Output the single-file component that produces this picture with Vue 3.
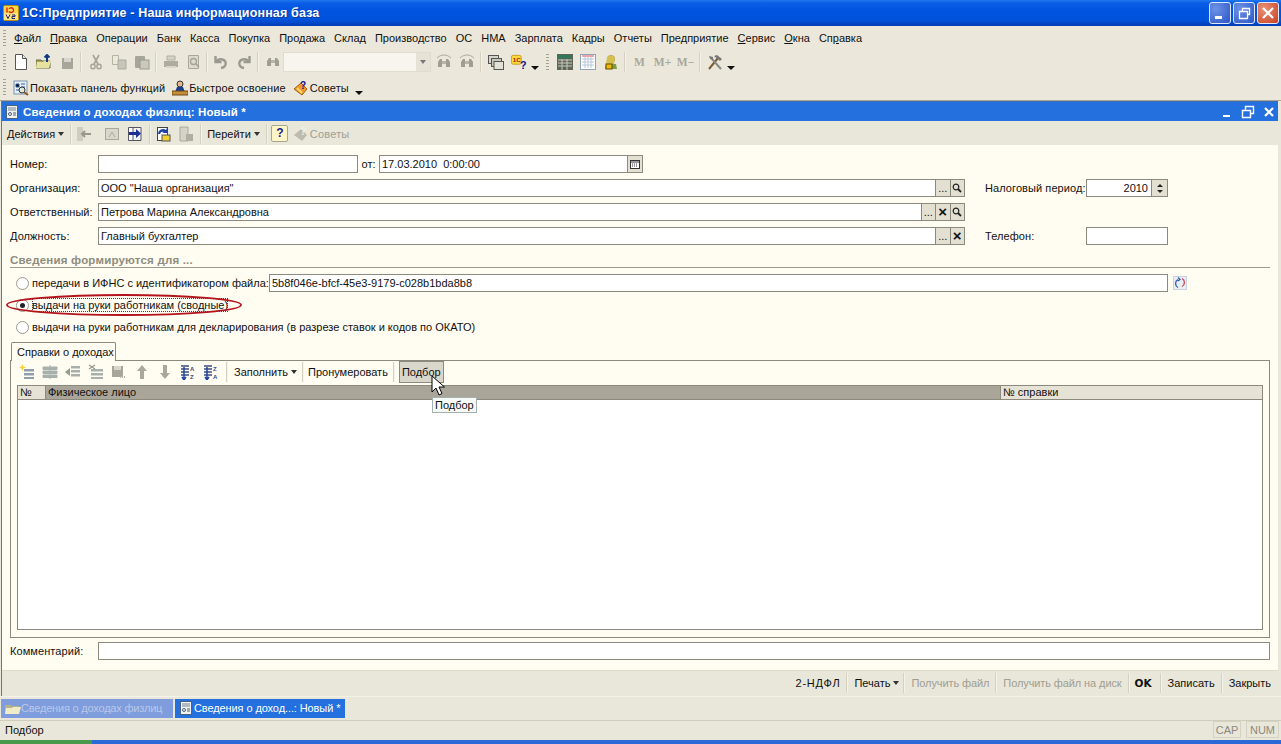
<template>
  <div class="app">
    <header class="title">
      <svg class="logo" viewBox="0 0 16 16" width="16" height="16"><rect x=".5" y=".5" width="15" height="15" rx="1.5" fill="#ffd84a" stroke="#b98a10"/><rect x="1" y="8" width="14" height="7" fill="#ffe680"/><path d="M3 2.500v5M5 4a2.400 2.400 0 1 1 0 2.400" stroke="#d22" stroke-width="1.400" fill="none" transform="translate(1 0)"/><path d="M3 9.500l2 4 2-4M9 10h3v1.500h-3v2h3" stroke="#227" fill="none"/></svg>
      <span class="title-text">1С:Предприятие - Наша информационная база</span>
      <span class="caption-btns">
        <span class="cap-btn"><svg viewBox="0 0 20 20" width="20" height="20"><rect x="5" y="13" width="7" height="3" fill="#fff"/></svg></span>
        <span class="cap-btn"><svg viewBox="0 0 20 20" width="20" height="20"><path d="M5.500 8.500h8v7h-8zM8.500 8V5.500h7v6H14" stroke="#fff" fill="none" stroke-width="1.300"/></svg></span>
        <span class="cap-btn close"><svg viewBox="0 0 20 20" width="20" height="20"><path d="M5 5l10 10M15 5L5 15" stroke="#fff" stroke-width="2.200"/></svg></span>
      </span>
    </header>

    <nav class="menu">
      <i class="grip"></i>
      <span><u>Ф</u>айл</span><span><u>П</u>равка</span><span>Операции</span><span>Банк</span><span>Касса</span><span>Покупка</span><span>Продажа</span><span>Склад</span><span>Производство</span><span>ОС</span><span>НМА</span><span>Зарплата</span><span>Кадры</span><span>Отчеты</span><span>Предприятие</span><span><u>С</u>ервис</span><span><u>О</u>кна</span><span>Сп<u>р</u>авка</span>
    </nav>

    <div class="toolbar tb1">
      <i class="grip"></i>
      <b class="ib"><svg viewBox="0 0 16 16"><path d="M2.500 .5h7l4 4v11h-11z" fill="#fff" stroke="#555"/><path d="M9.500 .5v4h4" fill="#ece9d8" stroke="#555"/></svg></b>
      <b class="ib"><svg viewBox="0 0 16 16"><path d="M0 6h5l1 1h8v7H0z" fill="#a8a468" stroke="#6d6a40"/><path d="M1 8h6l1-1h7l-2 7H0z" fill="#e8e2a0"/><path d="M11 8V1M8.500 3.500L11 1l2.500 2.500" stroke="#123a80" stroke-width="2" fill="none"/></svg></b>
      <b class="ib"><svg viewBox="0 0 16 16"><rect x="3" y="4" width="11" height="11" fill="#a8a69a"/><rect x="5" y="4" width="7" height="4" fill="#d8d6cc"/></svg></b>
      <i class="sep"></i>
      <b class="ib"><svg viewBox="0 0 16 16"><path d="M5 1l5 9M11 1L6 10" stroke="#a5a396" stroke-width="1.600"/><circle cx="5" cy="12.500" r="2.200" fill="none" stroke="#a5a396" stroke-width="1.400"/><circle cx="11" cy="12.500" r="2.200" fill="none" stroke="#a5a396" stroke-width="1.400"/></svg></b>
      <b class="ib"><svg viewBox="0 0 16 16"><path d="M1.500 1.500h6v9h-6z" fill="#ece9d8" stroke="#b4b2a6"/><path d="M7 6h8v9H7z" fill="#c8c6ba" stroke="#aaa89c"/></svg></b>
      <b class="ib"><svg viewBox="0 0 16 16"><rect x="1" y="2" width="10" height="12" rx="1" fill="#a8a69a"/><rect x="6" y="6" width="9" height="9" fill="#cbc9be" stroke="#9c9a8e"/></svg></b>
      <i class="sep"></i>
      <b class="ib"><svg viewBox="0 0 16 16"><path d="M4 2h8v4H4z" fill="#d5d3c8" stroke="#b0aea2"/><path d="M1 7h14v6H1z" fill="#aeac9f"/><path d="M3 13h10" stroke="#d8d6cb" stroke-width="2"/></svg></b>
      <b class="ib"><svg viewBox="0 0 16 16"><path d="M2.500 1.500h10v13h-10z" fill="#dcdacd" stroke="#aaa89c"/><circle cx="7.500" cy="7.500" r="3" fill="none" stroke="#a5a396" stroke-width="1.300"/><path d="M10 10l3 3" stroke="#a5a396" stroke-width="1.600"/></svg></b>
      <i class="sep s4"></i>
      <b class="ib"><svg viewBox="0 0 16 16"><path d="M2.500 2v6h6" fill="none" stroke="#9b9990" stroke-width="2.400"/><path d="M3 8a5.500 5.500 0 0 1 9.500 0c1 3-1 5.500-4.500 6" fill="none" stroke="#9b9990" stroke-width="2.400"/></svg></b>
      <b class="ib"><svg viewBox="0 0 16 16"><path d="M13.500 2v6h-6" fill="none" stroke="#9b9990" stroke-width="2.400"/><path d="M13 8a5.500 5.500 0 0 0-9.500 0c-1 3 1 5.500 4.500 6" fill="none" stroke="#9b9990" stroke-width="2.400"/></svg></b>
      <i class="sep"></i>
      <b class="ib"><svg viewBox="0 0 16 16"><path d="M2 12V7l2-3h2v8zM14 12V7l-2-3h-2v8z" fill="#a09e92"/><rect x="6" y="6" width="4" height="3" fill="#b8b6aa"/></svg></b>
      <span class="combo"><i></i><em><s></s></em></span>
      <b class="ib"><svg viewBox="0 0 16 16"><path d="M2 13V8l2-3h2v8zM14 13V8l-2-3h-2v8z" fill="#a09e92"/><rect x="6" y="7" width="4" height="3" fill="#b8b6aa"/><path d="M1 4C5 0 11 0 15 4" fill="none" stroke="#aaa89c"/></svg></b>
      <b class="ib"><svg viewBox="0 0 16 16"><path d="M2 13V8l2-3h2v8zM14 13V8l-2-3h-2v8z" fill="#a09e92"/><rect x="6" y="7" width="4" height="3" fill="#b8b6aa"/><path d="M1 4C5 0 11 0 15 4" fill="none" stroke="#aaa89c"/></svg></b>
      <i class="sep"></i>
      <b class="ib"><svg viewBox="0 0 16 16"><rect x=".5" y="1.500" width="10" height="8" fill="#d5d3c8" stroke="#555"/><rect x="3.500" y="4.500" width="10" height="8" fill="#c8c6bc" stroke="#555"/><rect x="6" y="7.500" width="9.500" height="8" fill="#e3e1d6" stroke="#555"/></svg></b>
      <b class="ib"><svg viewBox="0 0 18 16"><rect x=".5" y=".5" width="11" height="10" rx="2" fill="#ffd93b" stroke="#c7981a"/><text x="2" y="7.500" class="mini">1C</text><text x="10" y="15.500" class="q">?</text></svg></b>
      <i class="drop"></i>
      <i class="grip g2"></i>
      <b class="ib"><svg viewBox="0 0 16 16"><rect width="16" height="16" fill="#5f6659"/><rect x="1" y="1" width="14" height="3.500" fill="#33775a"/><path d="M1 6h14M1 9h14M1 12h14M5 5v11M10 5v11" stroke="#c9c8bd"/></svg></b>
      <b class="ib"><svg viewBox="0 0 16 16"><rect x=".5" y=".5" width="15" height="15" fill="#fff" stroke="#8fa4b8"/><path d="M2 2h12" stroke="#d05050"/><path d="M2 5h12M2 8h12M2 11h12M5 3v11M8 3v11M11 3v11" stroke="#b6c8d8"/></svg></b>
      <b class="ib"><svg viewBox="0 0 16 16"><circle cx="8" cy="5" r="3.500" fill="#e9c87a" stroke="#8f7d30"/><path d="M4 3l4-2 4 2-1 8H3z" fill="#d4c050"/><path d="M2 15l1-5h10l1 5z" fill="#7f9b45"/><rect x="3" y="10" width="6" height="5" fill="#f0b800" stroke="#624d00"/></svg></b>
      <i class="sep"></i>
      <b class="ib m">M</b><b class="ib m">M+</b><b class="ib m">M−</b>
      <i class="sep"></i>
      <b class="ib"><svg viewBox="0 0 16 16"><path d="M2 15L11 4" stroke="#7d5c32" stroke-width="2"/><path d="M7 2l6 5 2-2-5-4z" fill="#777"/><path d="M14 15L5 5" stroke="#8a8a84" stroke-width="2"/><path d="M2 2l4 1v3L3 5z" fill="#777"/></svg></b>
      <i class="drop"></i>
    </div>

    <div class="toolbar tb2">
      <i class="grip"></i>
      <span class="t2"><svg viewBox="0 0 16 16" width="16" height="16"><rect x="1" y="1" width="13" height="13" fill="#e8eef5" stroke="#7b93ad"/><path d="M3 4h3v3H3zM8 4h4M8 7h4M3 10h3" stroke="#2f5b9a"/><circle cx="9" cy="10" r="3" fill="#dfe8d8" stroke="#333"/><path d="M11 12l4 3" stroke="#8a5a2c" stroke-width="2"/></svg>Показать панель функций</span>
      <span class="t2"><svg viewBox="0 0 16 16" width="16" height="16"><circle cx="8" cy="4" r="3" fill="#e2b890" stroke="#333"/><path d="M3 12l2-5h6l2 5z" fill="#1b3f8f"/><rect y="11" width="16" height="4" fill="#c98d3a" stroke="#6b4a16"/></svg>Быстрое освоение</span>
      <span class="t2"><svg viewBox="0 0 16 16" width="16" height="16"><path d="M1 9l7-6 6 6-5 6z" fill="#ee9a2c" stroke="#a05f10"/><path d="M4 8l5 5" stroke="#ffd76a" stroke-width="2"/><text x="7" y="9" class="q big">?</text></svg>Советы</span>
      <i class="drop d2"></i>
    </div>

    <section class="child">
      <div class="child-title">
        <svg viewBox="0 0 14 14" width="14" height="14"><rect x="1.500" y=".5" width="11" height="13" fill="#f2f2ee" stroke="#49627f"/><path d="M3 3h8M3 5h8" stroke="#6f84a0"/><circle cx="5" cy="9" r="1.500" fill="none" stroke="#49627f"/><path d="M8 8h3M8 10h3" stroke="#49627f"/></svg>
        <strong>Сведения о доходах физлиц: Новый *</strong>
        <span class="child-btns">
          <svg viewBox="0 0 14 14" width="14" height="14"><path d="M3 11h7" stroke="#fff" stroke-width="2"/></svg>
          <svg viewBox="0 0 14 14" width="14" height="14"><path d="M1.500 5.500h8v7h-8zM4.500 5V1.500h8v7H10" fill="none" stroke="#fff" stroke-width="1.400"/></svg>
          <svg viewBox="0 0 14 14" width="14" height="14"><path d="M3 3l8 8M11 3l-8 8" stroke="#fff" stroke-width="2.200"/></svg>
        </span>
      </div>

      <div class="actions">
        <span class="txt act">Действия <s></s></span>
        <i class="sep"></i>
        <b class="ib"><svg viewBox="0 0 16 16"><rect x="1" y="1" width="6" height="14" fill="#cfcdc1"/><path d="M15 8H6M9 5L6 8l3 3" stroke="#9a988c" stroke-width="2" fill="none"/></svg></b>
        <b class="ib ib2"><svg viewBox="0 0 16 16"><rect x="1.500" y="2.500" width="13" height="11" fill="#d9d7cc" stroke="#aaa89c"/><path d="M5 11l3-5 3 5" stroke="#aaa89c" fill="none"/></svg></b>
        <b class="ib"><svg viewBox="0 0 16 16"><path d="M1.500 1.500h9v13h-9z" fill="#fff" stroke="#556"/><path d="M6 1.500h8v13H6z" fill="#f3f3f3" stroke="#556"/><path d="M2 6h7V3l5 4.500L9 12V9H2z" fill="#1a2f9a"/></svg></b>
        <i class="sep"></i>
        <b class="ib"><svg viewBox="0 0 16 16"><rect x="2.500" y="1.500" width="10" height="13" fill="#fff" stroke="#444"/><path d="M3 8a5 5 0 0 1 8-4l1-2v5H7l2-1a3 3 0 0 0-4 2z" fill="#1c3fa8"/><rect x="7" y="9" width="8" height="6" fill="#f0d030" stroke="#555"/></svg></b>
        <b class="ib"><svg viewBox="0 0 16 16"><path d="M2 1h8v14H2z" fill="#d5d3c8" stroke="#aaa89c"/><rect x="8" y="8" width="7" height="7" fill="#b0aea2"/></svg></b>
        <i class="sep"></i>
        <span class="txt act go">Перейти <s></s></span>
        <i class="sep"></i>
        <span class="help"><em>?</em></span>
        <span class="txt off tips"><svg viewBox="0 0 16 16" width="16" height="16"><path d="M1 9l7-6 6 6-5 6z" fill="#bdbbae"/><text x="7" y="9" class="q big grey">?</text></svg>Советы</span>
      </div>

      <form class="form" @submit.prevent>
        <div class="row">
          <label>Номер:</label>
          <span class="input w-num"></span>
          <span class="ot">от:</span>
          <span class="input w-date">17.03.2010&nbsp; 0:00:00</span>
          <span class="btn"><svg viewBox="0 0 10 10" width="10" height="10"><rect x=".5" y="1.500" width="9" height="8" fill="#fff" stroke="#333"/><path d="M1 3h8" stroke="#333"/><path d="M2 5h6M2 7h6" stroke="#333" stroke-dasharray="1 1"/></svg></span>
        </div>
        <div class="row">
          <label>Организация:</label>
          <span class="input grow">ООО "Наша организация"</span>
          <span class="btn">...</span>
          <span class="btn"><svg class="lens" viewBox="0 0 10 10"><circle cx="4" cy="4" r="2.800" fill="none" stroke="#222" stroke-width="1.200"/><path d="M6 6l3 3" stroke="#222" stroke-width="1.800"/></svg></span>
          <label class="side-l">Налоговый период:</label>
          <span class="input num">2010</span>
          <span class="spin"><s></s><s class="dn"></s></span>
        </div>
        <div class="row">
          <label>Ответственный:</label>
          <span class="input grow">Петрова Марина Александровна</span>
          <span class="btn">...</span>
          <span class="btn x">×</span>
          <span class="btn"><svg class="lens" viewBox="0 0 10 10"><circle cx="4" cy="4" r="2.800" fill="none" stroke="#222" stroke-width="1.200"/><path d="M6 6l3 3" stroke="#222" stroke-width="1.800"/></svg></span>
          <span class="side-blank"></span>
        </div>
        <div class="row">
          <label>Должность:</label>
          <span class="input grow">Главный бухгалтер</span>
          <span class="btn">...</span>
          <span class="btn x">×</span>
          <label class="side-l">Телефон:</label>
          <span class="input phone"></span>
        </div>

        <div class="group">Сведения формируются для ...</div>

        <div class="radio first">
          <i class="rb"></i><span class="r-text fixed">передачи в ИФНС с идентификатором файла:</span>
          <span class="input file">5b8f046e-bfcf-45e3-9179-c028b1bda8b8</span>
          <svg class="refresh" viewBox="0 0 14 14" width="14" height="14"><rect x=".5" y=".5" width="13" height="13" fill="#e9eef4" stroke="#9cb0c8" stroke-dasharray="1 1"/><path d="M9 2.500a4.500 4.500 0 0 1 0 8" fill="none" stroke="#c84848" stroke-width="1.300"/><path d="M5 11.500a4.500 4.500 0 0 1 0-8M5 1.500l2 2-2 1.500" fill="none" stroke="#2f5ca8" stroke-width="1.300"/></svg>
        </div>
        <div class="radio">
          <i class="rb on"></i><span class="r-text focus">выдачи на руки работникам (сводные)</span>
          <svg class="ellipse" viewBox="0 0 238 24" width="238" height="24"><ellipse cx="119" cy="12" rx="117" ry="10" fill="none" stroke="#b3141c" stroke-width="1.800"/></svg>
        </div>
        <div class="radio">
          <i class="rb"></i><span class="r-text">выдачи на руки работникам для декларирования (в разрезе ставок и кодов по ОКАТО)</span>
        </div>

        <div class="tab">Справки о доходах</div>
        <div class="panel">
          <div class="grid-tools">
            <b class="ib"><svg viewBox="0 0 16 16"><path d="M5 5h10v2.500H5zM5 9h10v2.500H5zM5 13h10v2H5z" fill="#8fa0ac"/><path d="M3.500 0l1 2.500L7 3.500 4.500 4.500 3.500 7l-1-2.500L0 3.500l2.500-1z" fill="#f5d23c"/></svg></b>
            <b class="ib"><svg viewBox="0 0 16 16"><path d="M1 3h14v2.500H1zM1 7h14v2.500H1zM1 11h14v2.500H1zM8 1v14" stroke="#a8b0ac" fill="#a8b0ac"/></svg></b>
            <b class="ib"><svg viewBox="0 0 16 16"><path d="M6 2h9v2.500H6zM6 6h9v2.500H6zM6 10h9v2.500H6z" fill="#a8b0ac"/><path d="M0 8l5-4v8z" fill="#8fa08a"/></svg></b>
            <b class="ib"><svg viewBox="0 0 16 16"><path d="M3 5h12v2.500H3zM3 9h12v2.500H3zM3 13h12v2H3z" fill="#a8b0ac"/><path d="M1 1l6 4M7 1L1 5" stroke="#9a9a90" stroke-width="1.400"/></svg></b>
            <b class="ib"><svg viewBox="0 0 16 16"><rect x="1" y="2" width="11" height="11" fill="#a8a69a"/><rect x="3" y="2" width="7" height="4" fill="#d8d6cc"/><path d="M9 13h6" stroke="#b8b6aa" stroke-width="2" stroke-dasharray="1 1"/></svg></b>
            <b class="ib"><svg viewBox="0 0 16 16"><path d="M8 1l5 6h-3v8H6V7H3z" fill="#aaa89c"/></svg></b>
            <b class="ib"><svg viewBox="0 0 16 16"><path d="M8 15l5-6h-3V1H6v8H3z" fill="#aaa89c"/></svg></b>
            <b class="ib"><svg viewBox="0 0 16 16"><path d="M1 2h8M1 5h8M1 8h8M1 11h8" stroke="#3c4f7e" stroke-width="1.500"/><path d="M4 3v12M2 13l2 3 2-3" stroke="#1a3fa5" fill="none" stroke-width="1.400"/><text x="10" y="7" class="az">A</text><text x="10" y="15" class="az">Z</text></svg></b>
            <b class="ib"><svg viewBox="0 0 16 16"><path d="M1 2h8M1 5h8M1 8h8M1 11h8" stroke="#3c4f7e" stroke-width="1.500"/><path d="M4 3v12M2 13l2 3 2-3" stroke="#1a3fa5" fill="none" stroke-width="1.400"/><text x="10" y="7" class="az">Z</text><text x="10" y="15" class="az">A</text></svg></b>
            <i class="sep gs1"></i>
            <span class="txt act">Заполнить <s></s></span>
            <i class="sep gs2"></i>
            <span class="txt">Пронумеровать</span>
            <i class="sep"></i>
            <span class="pressed">Подбор</span>
          </div>
          <div class="table">
            <div class="thead">
              <span class="th c1">№</span>
              <span class="th c2">Физическое лицо</span>
              <span class="th c3">№ справки</span>
            </div>
          </div>
          <div class="tooltip">Подбор</div>
          <svg class="cursor" viewBox="0 0 14 21" width="14" height="21"><path d="M1 1v16l4-4 3 7 3-1.500-3-6.500h5.500z" fill="#fff" stroke="#000"/></svg>
        </div>

        <div class="comment"><label>Комментарий:</label><span class="input grow"></span></div>
      </form>

      <footer class="bottom">
        <span class="txt wide">2-НДФЛ</span><i class="sep"></i>
        <span class="txt act print">Печать <s></s></span><i class="sep"></i>
        <span class="txt off">Получить файл</span><i class="sep"></i>
        <span class="txt off">Получить файл на диск</span><i class="sep"></i>
        <span class="txt ok">OK</span><i class="sep"></i>
        <span class="txt">Записать</span><i class="sep"></i>
        <span class="txt">Закрыть</span>
      </footer>
    </section>

    <div class="wins">
      <span class="win idle"><svg viewBox="0 0 16 16" width="16" height="16"><path d="M0 5h6l1 1h7v8H0z" fill="#b6b28a"/><path d="M1 8h6l1-1h8l-2 7H0z" fill="#f0ecc8"/></svg>Сведения о доходах физлиц</span>
      <span class="win active"><svg viewBox="0 0 14 14" width="14" height="14"><rect x="1.500" y=".5" width="11" height="13" fill="#f2f2ee" stroke="#49627f"/><path d="M3 3h8M3 5h8" stroke="#6f84a0"/><circle cx="5" cy="9" r="1.500" fill="none" stroke="#49627f"/><path d="M8 8h3M8 10h3" stroke="#49627f"/></svg>Сведения о доход...: Новый *</span>
    </div>
    <div class="status">
      <span class="st-text">Подбор</span>
      <span class="ind">CAP</span><span class="ind num-i">NUM</span>
    </div>
    <div class="taskbar"><i></i></div>
  </div>
</template>

<script setup>
</script>

<style>
html, body { margin: 0; overflow: hidden; background: #ece9d8; }
</style>

<style scoped>
.app {
  width: 1281px; height: 744px; display: flex; flex-direction: column; overflow: hidden;
  background: #e9e6da; color: #111;
  font: 11px/14px "Liberation Sans", Arial, sans-serif;
}
i, em, s, b { font-style: normal; text-decoration: none; font-weight: normal; display: block; }

.title {
  height: 26px; flex: none; display: flex; align-items: center; padding-left: 3px; box-sizing: border-box;
  background: linear-gradient(#1f78ee 0, #0a5ee6 3px, #0054e0 10px, #0052dc 20px, #0040b8 25px);
}
.logo { flex: none; }
.title-text { margin-left: 3px; color: #fff; font-weight: bold; font-size: 12.500px; letter-spacing: .15px; text-shadow: 1px 1px 0 #0a3a9a; }
.caption-btns { margin-left: auto; margin-right: 2px; display: flex; gap: 2px; }
.cap-btn { width: 20px; height: 20px; border: 1px solid #dfe8fb; border-radius: 3px; box-sizing: content-box; display: block; background: radial-gradient(circle at 30% 30%, #6d92e6, #2a56c6); }
.cap-btn svg { display: block; }
.cap-btn.close { background: radial-gradient(circle at 30% 30%, #ea9278, #c8401e); }

.menu { height: 24px; flex: none; display: flex; align-items: center; background: #ebe8db; gap: 9px; }
.menu .grip { margin: 0 -1px 0 3px; }
.menu u { text-underline-offset: 1px; }
.grip { width: 3px; height: 16px; flex: none; background: repeating-linear-gradient(#a5a293 0 1px, transparent 1px 3px); }

.toolbar { flex: none; display: flex; align-items: center; background: #ebe8db; }
.tb1 { height: 24px; }
.tb1 > .grip { margin: 0 3px 0 3px; }
.tb1 > .g2 { margin: 0 4px 0 2px; }
.ib { width: 23px; height: 20px; flex: none; display: flex; align-items: center; justify-content: center; }
.ib svg { width: 16px; height: 16px; display: block; }
.m { font: bold 11.500px "Liberation Serif", serif; color: #a9a79b; }
.sep { width: 1px; height: 20px; flex: none; margin: 0 2px; background: #d4d1c3; border-right: 1px solid #f5f3e9; }
.s4 { margin: 0 1px; }
.combo { width: 148px; height: 20px; margin: 0 1px 0 -1px; box-sizing: border-box; display: flex; background: #f7f5ee; border: 1px solid #e0ddd0; }
.combo i { flex: 1; }
.combo em { width: 14px; display: flex; align-items: center; justify-content: center; background: #e6e3d6; }
.combo s, .act s { width: 0; height: 0; border: 3px solid transparent; border-top: 4px solid #333; border-bottom: 0; }
.combo s { border-top-color: #777; }
.drop { width: 0; height: 0; flex: none; margin: 11px 5px 0 1px; border: 4px solid transparent; border-top: 4px solid #111; border-bottom: 0; }
.tb2 { height: 27px; border-bottom: 1px solid #a9a698; box-sizing: border-box; }
.tb2 > .grip { margin: 0 7px 0 3px; }
.t2 { display: flex; align-items: center; gap: 1px; margin-right: 7px; padding-top: 1px; letter-spacing: .1px; }
.d2 { margin: 12px 0 0 -1px; }

.child { flex: 1; min-height: 0; display: flex; flex-direction: column; margin: 0 3px 0 1px; border-left: 1px solid #777568; }
.child-title { height: 20px; flex: none; display: flex; align-items: center; padding-left: 3px; background: #2470de; border-top: 1px solid #3e6eb0; box-sizing: border-box; color: #fff; gap: 4px; }
.child-title strong { font-size: 11.500px; letter-spacing: .15px; }
.child-btns { margin-left: auto; margin-right: 2px; display: flex; gap: 7px; }
.actions { height: 24px; flex: none; display: flex; align-items: center; padding-left: 2px; background: #e9e6da; padding-top: 1px; box-sizing: border-box; }
.txt { flex: none; display: flex; align-items: center; gap: 3px; padding: 0 3px; white-space: nowrap; }
.act s { display: block; }
.off { color: #a09e92; letter-spacing: -.1px; }
.actions .sep { margin: 0 0 0 3px; }
.ib2 { margin-left: 5px; }
.go { margin-left: 2px; }
.help { width: 22px; height: 20px; margin: 0 2px 0 1px; display: flex; align-items: center; justify-content: center; }
.help em { width: 15px; height: 15px; text-align: center; line-height: 15px; font-weight: bold; font-size: 12px; color: #1b1b90; background: #fff6c8; border: 1px solid #a8a68f; border-radius: 2px; }
.tips { padding-left: 0; gap: 1px; letter-spacing: .2px; }

.form { flex: 1; min-height: 0; background: #fffcf1; padding: 7px 8px 0 8px; display: flex; flex-direction: column; }
.row { height: 24px; flex: none; display: flex; align-items: center; }
.row label, .comment label { width: 88px; height: 18px; line-height: 19px; flex: none; white-space: nowrap; letter-spacing: .08px; }
.input { height: 18px; box-sizing: border-box; flex: none; border: 1px solid #8b8a7d; background: #fff; padding: 0 2px; line-height: 17px; white-space: nowrap; overflow: hidden; }
.grow { flex: 1; width: 0; }
.w-num { width: 260px; }
.ot { width: 21px; height: 18px; line-height: 19px; text-align: center; flex: none; }
.w-date { width: 249px; }
.btn { width: 14.500px; height: 18px; flex: none; box-sizing: border-box; background: #e3e0d2; border: 1px solid #8b8a7d; border-left: 0; display: flex; align-items: center; justify-content: center; line-height: 12px; }
.x { font-size: 15px; font-weight: bold; }
.lens { width: 10px; height: 10px; display: block; }
.side-l { width: 101px !important; margin-left: 20px; }
.num { width: 66px; text-align: right; padding-right: 3px; }
.spin { width: 16px; height: 18px; flex: none; box-sizing: border-box; background: #e3e0d2; border: 1px solid #8b8a7d; border-left: 0; display: flex; flex-direction: column; align-items: center; justify-content: center; gap: 3px; margin-right: 102px; }
.spin s { width: 0; height: 0; border: 3px solid transparent; border-bottom: 3px solid #222; border-top: 0; }
.spin .dn { border-bottom: 0; border-top: 3px solid #222; }
.side-blank { width: 305px; flex: none; }
.phone { width: 82px; margin-right: 102px; }
.group { flex: none; height: 14px; margin-top: 5px; font-weight: bold; font-size: 11.500px; color: #8e8c7e; letter-spacing: .2px; border-bottom: 1px solid #9c9a8c; line-height: 15px; box-sizing: content-box; }
.radio { height: 22px; flex: none; display: flex; align-items: center; position: relative; padding-left: 6px; }
.first { margin-top: 4px; }
.rb { width: 11px; height: 11px; border: 1px solid #9a9a90; border-radius: 50%; background: #fff; flex: none; margin-right: 3px; position: relative; }
.on::after { content: ""; position: absolute; left: 3px; top: 3px; width: 5px; height: 5px; border-radius: 50%; background: #222; }
.r-text { white-space: nowrap; }
.fixed { width: 236px; flex: none; }
.focus { outline: 1px dotted #444; outline-offset: -1px; }
.file { width: 899px; margin-left: 1px; }
.refresh { margin-left: 5px; flex: none; }
.ellipse { position: absolute; left: -5px; top: -1px; }
.tab { width: 105px; height: 19px; margin: 4px 0 -1px 1px; box-sizing: border-box; flex: none; padding: 2px 0 0 5px; background: #fffcf1; border: 1px solid #8b8a7d; border-bottom: 0; border-radius: 2px 2px 0 0; position: relative; z-index: 1; white-space: nowrap; }
.panel { height: 278px; flex: none; box-sizing: border-box; border: 1px solid #8b8a7d; padding: 0 6px; position: relative; display: flex; flex-direction: column; }
.grid-tools { height: 24px; flex: none; display: flex; align-items: center; margin-left: -2px; padding-bottom: 3px; box-sizing: border-box; }
.grid-tools .ib { width: 23px; }
.gs1 { margin: 0 3px 0 4px !important; }
.gs2 { margin: 0 1px 0 2px !important; }
.pressed { margin-left: 2px; padding: 0 2px; height: 22px; box-sizing: border-box; line-height: 20px; background: #d9d6cb; border: 1px solid #8b8a7d; flex: none; }
.table { flex: 1; margin-bottom: 7px; background: #fff; border: 1px solid #8b8a7d; box-sizing: border-box; min-height: 0; }
.thead { height: 14px; display: flex; line-height: 13px; }
.th { box-sizing: border-box; padding-left: 2px; background: #e6e3d6; border-right: 1px solid #8b8a7d; border-bottom: 1px solid #8b8a7d; }
.c1 { width: 28px; flex: none; }
.c2 { width: 955px; flex: none; background: #a9a699; }
.c3 { flex: 1; border-right: 0; }
.tooltip { position: absolute; left: 421px; top: 36px; height: 16px; padding: 0 2px; line-height: 15px; box-sizing: border-box; background: #f7fbf8; border: 1px solid #a4b0b0; }
.cursor { position: absolute; left: 420px; top: 14px; }
.comment { flex: none; height: 18px; margin-top: 4px; display: flex; align-items: center; }
.bottom { height: 26px; flex: none; display: flex; align-items: center; justify-content: flex-end; padding: 0 4px 2px 0; background: #e9e6da; border-top: 1px solid #dedbcc; box-sizing: border-box; }
.bottom .sep { margin: 0 3px; }
.wide { letter-spacing: .8px; }
.print { margin-right: -2px; }
.ok { font-weight: bold; font-family: "DejaVu Sans", sans-serif; font-size: 10.500px; margin: 0 2px 0 -1px; }

.wins { height: 24px; flex: none; display: flex; align-items: center; gap: 2px; padding-left: 1px; background: #e9e6da; border-top: 1px solid #f5f3e8; box-sizing: border-box; }
.win { height: 19px; display: flex; align-items: center; box-sizing: border-box; white-space: nowrap; padding-bottom: 1px; }
.idle { width: 172px; padding-left: 4px; background: #7f9cdc; color: #b9c8ea; letter-spacing: -.2px; }
.active { width: 170px; gap: 1px; padding-left: 4px; background: #2470de; color: #fff; letter-spacing: -.1px; }
.status { height: 20px; flex: none; display: flex; align-items: center; padding: 0 0 2px 5px; background: #e9e6da; border-top: 1px solid #cfccbc; box-sizing: border-box; }
.st-text { flex: 1; }
.ind { width: 28px; height: 17px; box-sizing: border-box; margin-right: 5px; border: 1px solid #d5d2c4; color: #8c8a7e; text-align: center; line-height: 16px; flex: none; }
.num-i { width: 33px; margin-right: 2px; }
.taskbar { height: 4px; flex: none; background: #2b69d8; }
.taskbar i { width: 92px; height: 4px; background: #4a9a4e; }

.mini { font: bold 7px "Liberation Sans", sans-serif; fill: #a02010; }
.q { font: bold 12px "Liberation Sans", sans-serif; fill: #10108a; }
.big { font-size: 10px; }
.grey { fill: #f2f0e6; }
.az { font: bold 6px "Liberation Sans", sans-serif; fill: #3a4a80; }
</style>
